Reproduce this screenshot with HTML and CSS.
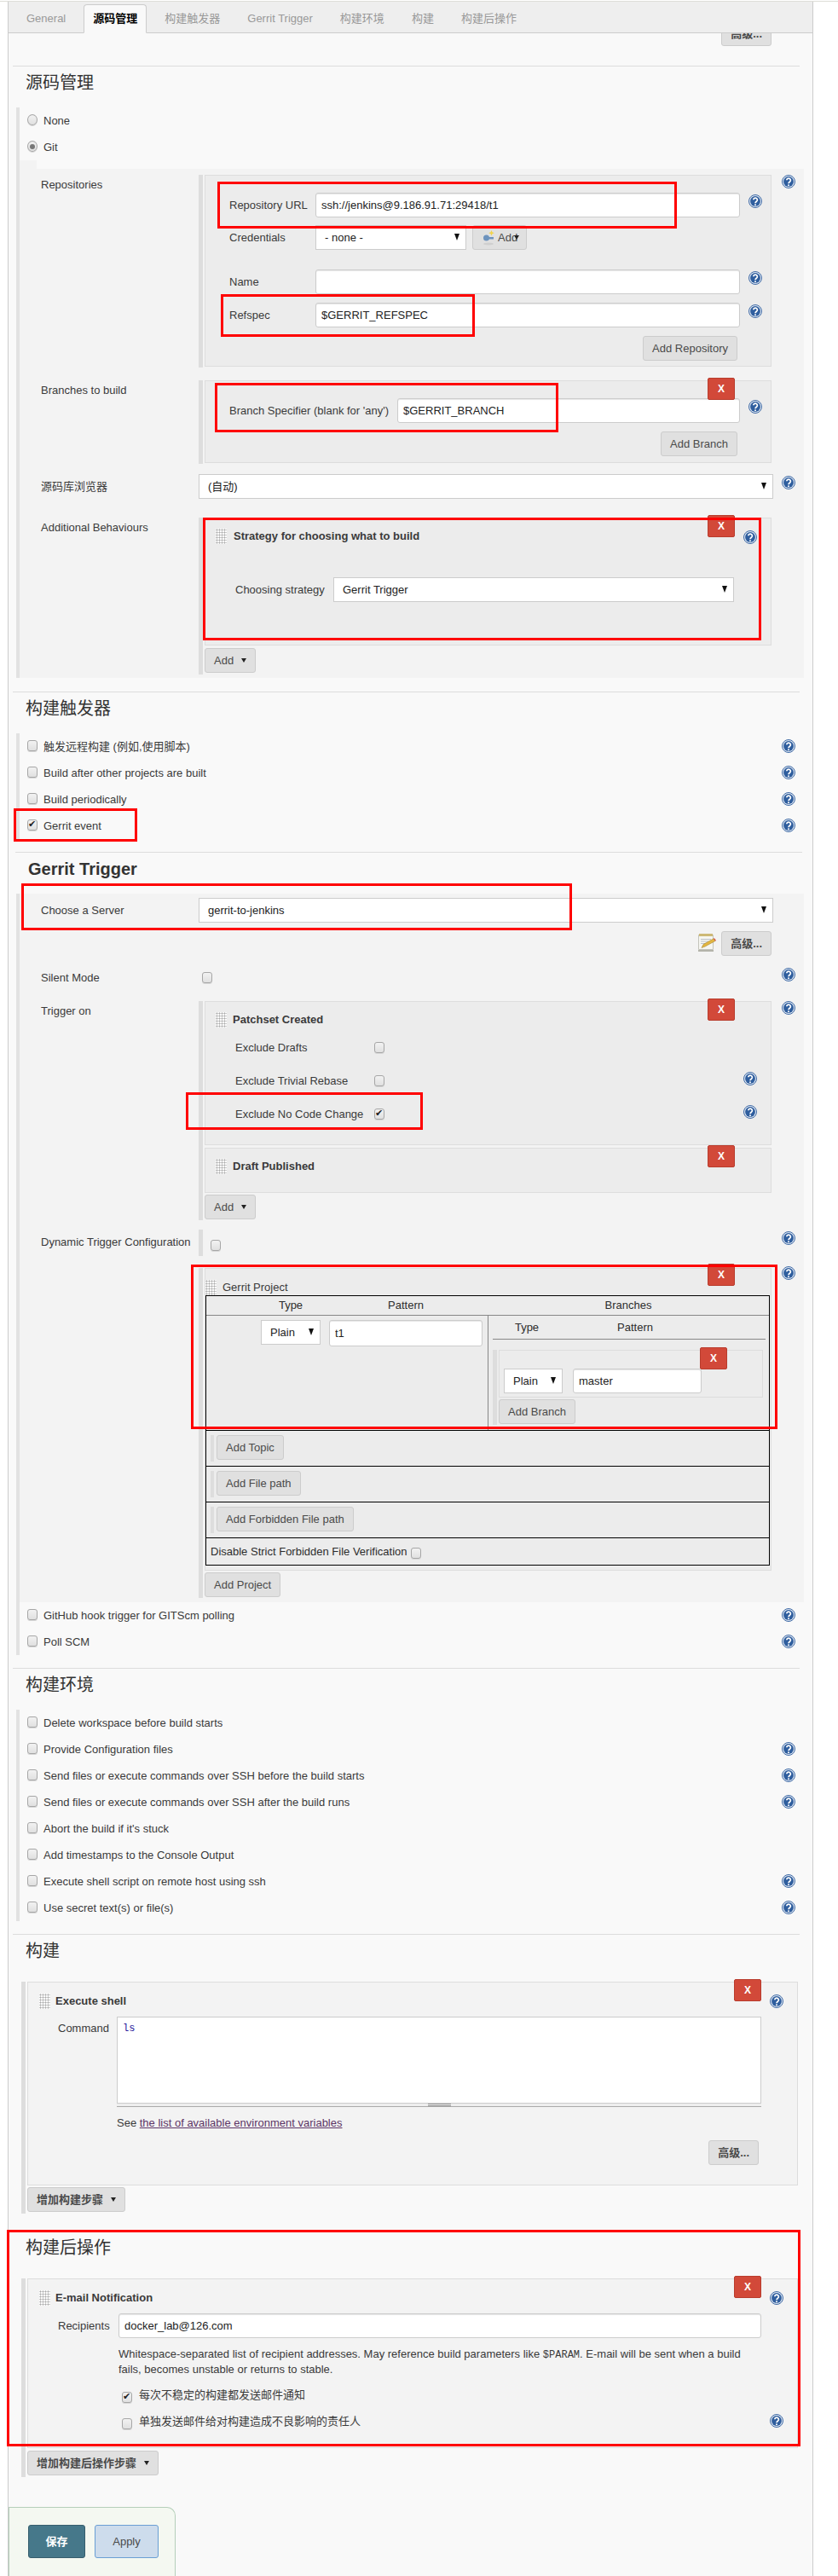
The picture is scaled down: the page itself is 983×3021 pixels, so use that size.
FILE: index.html
```html
<!DOCTYPE html>
<html lang="zh">
<head>
<meta charset="utf-8">
<title>Jenkins job configuration</title>
<link rel="stylesheet" href="styles.css">
</head>
<body>
<svg class="sprite" xmlns="http://www.w3.org/2000/svg">
  <symbol id="i-help" viewBox="0 0 16 16">
    <circle cx="8" cy="8" r="7.5" fill="#dfe7f2" stroke="#3f6aa5"/>
    <circle cx="8" cy="8" r="5.9" fill="#2f5e9e"/>
    <path d="M5.8 6.3a2.3 2.2 0 1 1 3.7 1.8c-.9.7-1.5 1.1-1.5 2.2" fill="none" stroke="#fff" stroke-width="1.7"/>
    <circle cx="8" cy="12.2" r="1" fill="#fff"/>
  </symbol>
  <symbol id="i-notepad" viewBox="0 0 23 23">
    <path d="M2.500 2.500h17v17h-17z" fill="#f6f6f1" stroke="#c4c4bb"/>
    <path d="M3 1h16v3H3z" fill="#cdb976"/>
    <path d="M5 7.500h12M5 10h9M5 12.500h6" stroke="#bcc2ca" stroke-width="1"/>
    <path d="M6 17.500l2-4L20 6.800l2 2.700-12 6.600z" fill="#e3b63f" stroke="#9a7a2a" stroke-width=".5"/>
    <path d="M20 6.800l2 2.700 1-.6-2-2.700z" fill="#d8423a"/>
    <path d="M2 20h18v2H2z" fill="#b4b4aa"/>
  </symbol>
  <symbol id="i-key" viewBox="0 0 15 18">
    <circle cx="4.500" cy="9" r="3.500" fill="#6d93bd"/>
    <path d="M6 8h7v2.500H6z" fill="#6d93bd"/>
    <path d="M10.500 0l1 2.300 2.300 1-2.300 1-1 2.300-1-2.300-2.300-1 2.300-1z" fill="#f1d44c"/>
    <ellipse cx="7" cy="16" rx="6" ry="1.500" fill="#cfcfcf"/>
  </symbol>
</svg>

<div class="topline"></div>
<main class="main">
  <nav class="tabs">
    <span class="tab">General</span>
    <span class="tab tab-active">源码管理</span>
    <span class="tab">构建触发器</span>
    <span class="tab">Gerrit Trigger</span>
    <span class="tab">构建环境</span>
    <span class="tab">构建</span>
    <span class="tab">构建后操作</span>
  </nav>

  <div class="top-adv"><button class="btn btn-strong">高级...</button></div>

  <!-- Source code management -->
  <h2 class="sec-head">源码管理</h2>
  <section class="bar-block">
    <label class="bool-row"><input type="radio" class="radio" name="scm"><span>None</span></label>
    <label class="bool-row"><input type="radio" class="radio" name="scm" checked><span>Git</span></label>
    <div class="notch"></div>
    <div class="panel panel-scm">
      <div class="form-row">
        <div class="form-label">Repositories</div>
        <div class="hetero">
          <div class="box box-repo">
            <div class="sub-row">
              <span>Repository URL</span>
              <input class="text" value="ssh://jenkins@9.186.91.71:29418/t1">
              <svg class="help help-m2"><use href="#i-help"/></svg>
            </div>
            <div class="sub-row sub-cred">
              <span>Credentials</span>
              <div class="cred-ctl">
                <select class="sel sel-cred"><option>- none -</option></select>
                <button class="btn btn-cred"><svg class="key"><use href="#i-key"/></svg>Add<i class="caret caret-over"></i></button>
              </div>
            </div>
            <div class="sub-row sub-name">
              <span>Name</span>
              <input class="text">
              <svg class="help help-m2"><use href="#i-help"/></svg>
            </div>
            <div class="sub-row sub-ref">
              <span>Refspec</span>
              <input class="text" value="$GERRIT_REFSPEC">
              <svg class="help help-m2"><use href="#i-help"/></svg>
            </div>
            <div class="add-row"><button class="btn">Add Repository</button></div>
          </div>
        </div>
        <svg class="help"><use href="#i-help"/></svg>
      </div>

      <div class="form-row row-branches">
        <div class="form-label">Branches to build</div>
        <div class="hetero">
          <div class="box box-branch">
            <button class="x-btn">X</button>
            <div class="sub-row sub-branch">
              <span>Branch Specifier (blank for 'any')</span>
              <input class="text" value="$GERRIT_BRANCH">
              <svg class="help help-m2"><use href="#i-help"/></svg>
            </div>
            <div class="add-row"><button class="btn">Add Branch</button></div>
          </div>
        </div>
      </div>

      <div class="form-row row-browser">
        <div class="form-label form-label-ctl">源码库浏览器</div>
        <select class="sel sel-full"><option>(自动)</option></select>
        <svg class="help help-m2"><use href="#i-help"/></svg>
      </div>

      <div class="form-row row-behav">
        <div class="form-label">Additional Behaviours</div>
        <div class="hetero hetero-p2">
          <div class="box box-strategy">
            <button class="x-btn">X</button>
            <div class="item-head">
              <i class="handle"></i>
              <strong>Strategy for choosing what to build</strong>
              <svg class="help help-push help-m2"><use href="#i-help"/></svg>
            </div>
            <div class="sub-row sub-strategy">
              <span>Choosing strategy</span>
              <select class="sel sel-strategy"><option>Gerrit Trigger</option></select>
            </div>
          </div>
          <button class="btn btn-add btn-m3">Add<i class="caret"></i></button>
        </div>
      </div>
    </div>
  </section>

  <!-- Build triggers -->
  <h2 class="sec-head sec-m16">构建触发器</h2>
  <section class="bar-block">
    <label class="bool-row"><input type="checkbox" class="check"><span>触发远程构建 (例如,使用脚本)</span><svg class="help help-row"><use href="#i-help"/></svg></label>
    <label class="bool-row"><input type="checkbox" class="check"><span>Build after other projects are built</span><svg class="help help-row"><use href="#i-help"/></svg></label>
    <label class="bool-row"><input type="checkbox" class="check"><span>Build periodically</span><svg class="help help-row"><use href="#i-help"/></svg></label>
    <label class="bool-row"><input type="checkbox" class="check" checked><span>Gerrit event</span><svg class="help help-row"><use href="#i-help"/></svg></label>
  </section>

  <h2 class="sec-head sec-gerrit">Gerrit Trigger</h2>
  <section class="bar-block">
    <div class="panel panel-gerrit">
      <div class="form-row">
        <div class="form-label form-label-ctl">Choose a Server</div>
        <select class="sel sel-full"><option>gerrit-to-jenkins</option></select>
      </div>
      <div class="form-row row-adv">
        <div></div>
        <div class="adv-tools">
          <svg class="notepad"><use href="#i-notepad"/></svg>
          <button class="btn btn-strong">高级...</button>
        </div>
      </div>
      <div class="form-row row-silent">
        <div class="form-label">Silent Mode</div>
        <div class="silent-ctl"><input type="checkbox" class="check"></div>
        <svg class="help"><use href="#i-help"/></svg>
      </div>
      <div class="form-row row-trigger">
        <div class="form-label">Trigger on</div>
        <div class="hetero">
          <div class="box box-patch">
            <button class="x-btn">X</button>
            <div class="item-head item-head-tight"><i class="handle"></i><strong>Patchset Created</strong></div>
            <div class="check-row check-first"><span class="check-label">Exclude Drafts</span><input type="checkbox" class="check"></div>
            <div class="check-row"><span class="check-label">Exclude Trivial Rebase</span><input type="checkbox" class="check"><svg class="help help-push help-up"><use href="#i-help"/></svg></div>
            <div class="check-row"><span class="check-label">Exclude No Code Change</span><input type="checkbox" class="check" checked><svg class="help help-push help-up"><use href="#i-help"/></svg></div>
          </div>
          <div class="box box-draft">
            <button class="x-btn">X</button>
            <div class="item-head item-head-tight"><i class="handle"></i><strong>Draft Published</strong></div>
          </div>
          <button class="btn btn-add btn-m2">Add<i class="caret"></i></button>
        </div>
        <svg class="help"><use href="#i-help"/></svg>
      </div>
      <div class="form-row row-dynamic">
        <div class="form-label form-label-ctl">Dynamic Trigger Configuration</div>
        <div class="dyn-ctl"><input type="checkbox" class="check"></div>
        <svg class="help help-m2"><use href="#i-help"/></svg>
      </div>
      <div class="form-row row-project">
        <div></div>
        <div class="hetero">
          <div class="box box-project">
            <button class="x-btn x-btn-high">X</button>
            <div class="item-head item-head-flush"><i class="handle"></i><span>Gerrit Project</span></div>
            <div class="gp-table">
              <div class="gp-head">
                <div class="pat-grid"><span>Type</span><span>Pattern</span></div>
                <div class="gp-branches">Branches</div>
              </div>
              <div class="gp-body">
                <div class="pat-grid pat-row">
                  <select class="sel sel-type"><option>Plain</option></select>
                  <input class="text text-t1" value="t1">
                </div>
                <div class="gp-right">
                  <div class="br-head"><span>Type</span><span>Pattern</span></div>
                  <div class="hetero hetero-branch">
                    <div class="box box-br-item">
                      <button class="x-btn x-btn-br">X</button>
                      <select class="sel sel-type-br"><option>Plain</option></select>
                      <input class="text text-master" value="master">
                    </div>
                    <button class="btn btn-m2">Add Branch</button>
                  </div>
                </div>
              </div>
              <div class="gp-add"><div class="gp-add-wrap"><button class="btn">Add Topic</button></div></div>
              <div class="gp-add"><div class="gp-add-wrap"><button class="btn">Add File path</button></div></div>
              <div class="gp-add"><div class="gp-add-wrap"><button class="btn">Add Forbidden File path</button></div></div>
              <div class="gp-last"><span>Disable Strict Forbidden File Verification</span><input type="checkbox" class="check"></div>
            </div>
          </div>
          <button class="btn btn-m2">Add Project</button>
        </div>
        <svg class="help help-n2"><use href="#i-help"/></svg>
      </div>
    </div>
    <label class="bool-row"><input type="checkbox" class="check"><span>GitHub hook trigger for GITScm polling</span><svg class="help help-row"><use href="#i-help"/></svg></label>
    <label class="bool-row"><input type="checkbox" class="check"><span>Poll SCM</span><svg class="help help-row"><use href="#i-help"/></svg></label>
  </section>

  <!-- Build environment -->
  <h2 class="sec-head">构建环境</h2>
  <section class="bar-block">
    <label class="bool-row"><input type="checkbox" class="check"><span>Delete workspace before build starts</span></label>
    <label class="bool-row"><input type="checkbox" class="check"><span>Provide Configuration files</span><svg class="help help-row"><use href="#i-help"/></svg></label>
    <label class="bool-row"><input type="checkbox" class="check"><span>Send files or execute commands over SSH before the build starts</span><svg class="help help-row"><use href="#i-help"/></svg></label>
    <label class="bool-row"><input type="checkbox" class="check"><span>Send files or execute commands over SSH after the build runs</span><svg class="help help-row"><use href="#i-help"/></svg></label>
    <label class="bool-row"><input type="checkbox" class="check"><span>Abort the build if it's stuck</span></label>
    <label class="bool-row"><input type="checkbox" class="check"><span>Add timestamps to the Console Output</span></label>
    <label class="bool-row"><input type="checkbox" class="check"><span>Execute shell script on remote host using ssh</span><svg class="help help-row"><use href="#i-help"/></svg></label>
    <label class="bool-row"><input type="checkbox" class="check"><span>Use secret text(s) or file(s)</span><svg class="help help-row"><use href="#i-help"/></svg></label>
  </section>

  <!-- Build -->
  <h2 class="sec-head">构建</h2>
  <section class="step-col">
    <div class="box box-step">
      <button class="x-btn">X</button>
      <div class="item-head item-head-step">
        <i class="handle"></i><strong>Execute shell</strong>
        <svg class="help help-push help-m1"><use href="#i-help"/></svg>
      </div>
      <div class="cmd-row">
        <div class="cmd-label">Command</div>
        <div>
          <textarea class="code">ls</textarea>
          <div class="grip"><i></i></div>
        </div>
      </div>
      <div class="env-link">See <a href="#">the list of available environment variables</a></div>
      <div class="step-adv"><button class="btn btn-strong">高级...</button></div>
    </div>
    <button class="btn btn-add btn-strong btn-m2">增加构建步骤<i class="caret"></i></button>
  </section>

  <!-- Post build -->
  <h2 class="sec-head sec-m20">构建后操作</h2>
  <section class="step-col">
    <div class="box box-step">
      <button class="x-btn">X</button>
      <div class="item-head item-head-step">
        <i class="handle"></i><strong>E-mail Notification</strong>
        <svg class="help help-push help-m1"><use href="#i-help"/></svg>
      </div>
      <div class="rcpt-row">
        <span>Recipients</span>
        <input class="text" value="docker_lab@126.com">
      </div>
      <p class="desc">Whitespace-separated list of recipient addresses. May reference build parameters like <code>$PARAM</code>. E-mail will be sent when a build fails, becomes unstable or returns to stable.</p>
      <div class="mail-opts">
        <label class="mail-row"><input type="checkbox" class="check" checked><span>每次不稳定的构建都发送邮件通知</span></label>
        <label class="mail-row"><input type="checkbox" class="check"><span>单独发送邮件给对构建造成不良影响的责任人</span><svg class="help help-push help-mail"><use href="#i-help"/></svg></label>
      </div>
    </div>
    <button class="btn btn-add btn-strong btn-m3">增加构建后操作步骤<i class="caret"></i></button>
  </section>

  <div class="save-box">
    <button class="btn-save">保存</button>
    <button class="btn-apply">Apply</button>
  </div>
</main>

<!-- Red review annotations lying over the form -->
<div class="anno anno-url"></div>
<div class="anno anno-refspec"></div>
<div class="anno anno-branch"></div>
<div class="anno anno-strategy"></div>
<div class="anno anno-event"></div>
<div class="anno anno-server"></div>
<div class="anno anno-nocode"></div>
<div class="anno anno-project"></div>
<div class="anno anno-post"></div>
</body>
</html>
```
FILE: styles.css
```css
* { box-sizing: border-box; }
html, body { margin: 0; padding: 0; }
body {
  position: relative;
  padding-top: 1px;
  background: #fff;
  color: #3a3a3a;
  font: 13px/18px "Liberation Sans", "Noto Sans CJK SC", sans-serif;
}
.sprite { display: none; }
.topline { height: 1px; background: #deded8; }

.main {
  width: 945px;
  margin-left: 9px;
  background: #f9f9f9;
  border-left: 1px solid #ccc;
  border-right: 1px solid #ccc;
}

/* tabs */
.tabs {
  display: flex;
  align-items: flex-end;
  gap: 10px;
  height: 37px;
  padding-left: 10px;
  background: #eee;
  border-bottom: 1px solid #ccc;
}
.tab {
  height: 34px;
  padding: 0 10px;
  margin-bottom: -1px;
  border: 1px solid transparent;
  line-height: 31px;
  color: #999;
  white-space: nowrap;
}
.tab-active {
  background: #f9f9f9;
  border-color: #ccc;
  border-bottom-color: #f9f9f9;
  border-radius: 4px 4px 0 0;
  color: #000;
  font-weight: bold;
}

/* buttons */
.btn {
  display: inline-flex;
  align-items: center;
  flex: none;
  height: 29px;
  padding: 0 10px;
  background: #e0e0e0;
  border: 1px solid #ccc;
  border-radius: 3px;
  color: #4a4a4a;
  font: inherit;
  white-space: nowrap;
}
.btn-strong { font-weight: bold; }
.btn-m2 { margin-top: 2px; }
.btn-m3 { margin-top: 3px; }
.btn-add .caret { margin-left: 9px; }
.caret {
  display: inline-block;
  width: 0;
  height: 0;
  border-left: 3.5px solid transparent;
  border-right: 3.5px solid transparent;
  border-top: 5px solid #222;
}
.btn-cred { padding: 0 0 0 11px; width: 64px; }
.key { width: 15px; height: 18px; margin-right: 3px; }
.caret-over { margin-left: -4px; }
.x-btn {
  position: absolute;
  top: -4px;
  right: 42px;
  width: 32px;
  height: 26px;
  padding: 0;
  background: #d24939;
  border: 1px solid #b93c2d;
  border-radius: 2px;
  color: #fff;
  font: bold 12px/24px "Liberation Sans", sans-serif;
}
.x-btn-high { top: -6px; }
.x-btn-br { right: 41px; }

.top-adv {
  display: flex;
  justify-content: flex-end;
  align-items: flex-end;
  height: 15px;
  margin-bottom: 23px;
  padding-right: 48px;
  overflow: hidden;
}
.top-adv .btn { border-radius: 0 0 3px 3px; }

/* section headings */
.sec-head {
  height: 49px;
  margin: 15px 15px 0 5px;
  padding: 5px 0 0 15px;
  border-top: 1px solid #ddd;
  color: #333;
  font-size: 20px;
  font-weight: normal;
  line-height: 28px;
}
.top-adv + .sec-head { margin-top: 0; }
.sec-m16 { margin-top: 16px; }
.sec-m20 { margin-top: 20px; }
.sec-gerrit {
  margin-left: 8px;
  margin-right: 12px;
  font-weight: bold;
}

/* bars and panels */
.bar-block {
  margin: 0 10px 0 9px;
  border-left: 4px solid #e2e2e2;
}
.bool-row {
  display: flex;
  align-items: center;
  height: 31px;
  padding: 0 10px 0 9px;
}
.bool-row > input { margin: -3px 7px 0 0; }
.help {
  display: block;
  flex: none;
  width: 16px;
  height: 16px;
}
.help-row { margin: -1px 0 0 auto; }
.help-m1 { margin-top: 1px; }
.help-m2 { margin-top: 2px; }
.help-n2 { margin-top: -2px; }
.help-push { margin-left: auto; }
.help-up { margin-bottom: 5px; }
.help-mail { margin-top: 4px; }

.check, .radio {
  appearance: none;
  position: relative;
  flex: none;
  width: 12px;
  height: 13px;
  margin: 0;
  background: linear-gradient(#f2f2f2, #e0e0e0);
  border: 1px solid #a6a6a6;
  box-shadow: 0 1px 0 #d8d8d8;
}
.check { border-radius: 3px; }
.radio { border-radius: 50%; }
.check:checked::after {
  content: "✔";
  position: absolute;
  left: 0;
  top: -1px;
  color: #222;
  font: 11px/12px "DejaVu Sans", sans-serif;
}
.radio:checked::after {
  content: "";
  position: absolute;
  left: 2px;
  top: 3px;
  width: 6px;
  height: 6px;
  border-radius: 50%;
  background: #777;
}
.notch { width: 20px; height: 10px; background: #f3f3f3; }
.panel { background: #f3f3f3; }
.panel-scm { padding: 7px 0 4px; }
.panel-gerrit { padding: 5px 0 5px; }

.form-row {
  display: grid;
  grid-template-columns: 175px 674px 16px;
  column-gap: 10px;
  align-items: start;
  padding-left: 25px;
}
.form-label { line-height: 24px; white-space: nowrap; }
.form-label-ctl { line-height: 29px; }
.row-branches { margin-top: 15px; }
.row-browser { margin-top: 12px; }
.row-behav { margin-top: 22px; }
.row-adv { margin-top: 10px; }
.row-silent { margin-top: 14px; }
.row-trigger { margin-top: 15px; }
.row-dynamic { margin-top: 11px; }
.row-project { margin-top: 14px; }

.hetero {
  padding: 0 2px 1px 2px;
  border-left: 5px solid #ddd;
}
.hetero-p2 { padding-bottom: 2px; }
.box {
  position: relative;
  background: #ececec;
  border: 1px solid #ddd;
}
.box + .box { margin-top: 3px; }
.box-repo { padding: 20px 0 6px; }
.box-branch { padding: 20px 0 7px; }
.box-strategy { padding-bottom: 50px; }
.box-patch { padding-bottom: 21px; }
.box-draft { padding-bottom: 21px; }
.box-project { padding-bottom: 5px; }

.sub-row {
  display: grid;
  grid-template-columns: 91px 498px 16px;
  column-gap: 10px;
  align-items: center;
  padding-left: 28px;
  white-space: nowrap;
}
.sub-row .help { align-self: start; }
.sub-cred { margin-top: 9px; }
.sub-name { margin-top: 23px; }
.sub-ref { margin-top: 10px; }
.sub-branch { grid-template-columns: 187px 402px 16px; }
.sub-strategy {
  grid-template-columns: 105px 470px;
  margin-top: 39px;
  padding-left: 35px;
}
.add-row {
  display: flex;
  justify-content: flex-end;
  margin-top: 10px;
  padding-right: 39px;
}
.cred-ctl { display: flex; gap: 7px; }

/* fields */
.text, .sel {
  display: block;
  width: 100%;
  height: 29px;
  padding: 0 6px;
  background-color: #fff;
  border: 1px solid #ccc;
  color: #222;
  font: inherit;
}
.text {
  border-radius: 3px;
  box-shadow: inset 0 1px 1px #e6e6e6;
}
.sel {
  appearance: none;
  padding: 0 16px 0 10px;
  border-radius: 0;
  background-image: url("data:image/svg+xml,%3Csvg xmlns='http://www.w3.org/2000/svg' width='6' height='8'%3E%3Cpath d='M0 0h6L3 8z' fill='%23111'/%3E%3C/svg%3E");
  background-repeat: no-repeat;
  background-position: right 7px top 9px;
}
.sel-cred { width: 177px; }
.btn-cred { height: 29px; }
.sel-strategy { width: 470px; }
.sel-full { width: 674px; }
.sel-type { width: 70px; }
.text-t1 { width: 180px; height: 31px; }
.sel-type-br { width: 69px; }
.text-master { width: 151px; }

/* repeatable items */
.item-head {
  display: flex;
  align-items: flex-start;
  gap: 8px;
  height: 30px;
  padding: 12px 16px 0 12px;
  line-height: 18px;
  white-space: nowrap;
}
.item-head-tight { gap: 7px; }
.item-head-flush { height: 31px; padding: 13px 0 0 0; gap: 7px; }
.item-head-step { height: 31px; padding: 13px 16px 0 13px; gap: 6px; }
.handle {
  display: block;
  flex: none;
  width: 13px;
  height: 18px;
  background-color: #fbfbfb;
  background-image: radial-gradient(#aaa 45%, transparent 50%);
  background-size: 3px 3px;
}
.check-row {
  display: flex;
  align-items: center;
  height: 29px;
  margin-top: 10px;
  padding: 0 16px 0 35px;
}
.check-first { margin-top: 9px; }
.check-label { flex: none; width: 163px; white-space: nowrap; }

.adv-tools {
  display: flex;
  justify-content: flex-end;
  gap: 6px;
  padding-right: 2px;
}
.notepad { width: 23px; height: 23px; margin-top: 2px; }
.silent-ctl { padding: 5px 0 0 4px; height: 24px; }
.dyn-ctl {
  height: 31px;
  padding: 12px 0 0 9px;
  border-left: 5px solid #ddd;
}

/* gerrit project table */
.gp-table {
  width: 662px;
  border: 1px solid #000;
  color: #2c2c2c;
}
.gp-head {
  display: grid;
  grid-template-columns: 330px 330px;
  height: 23px;
  border-bottom: 1px solid #888;
  line-height: 21px;
  text-align: center;
}
.pat-grid {
  display: grid;
  grid-template-columns: 70px 180px;
  column-gap: 10px;
  padding-left: 64px;
}
.pat-row { align-items: start; padding-top: 5px; }
.gp-body {
  display: grid;
  grid-template-columns: 330px 330px;
  height: 135px;
  border-bottom: 1px solid #000;
}
.gp-right {
  padding: 0 4px 0 5px;
  border-left: 1px solid #888;
}
.br-head {
  display: grid;
  grid-template-columns: 70px 184px;
  height: 28px;
  padding-left: 5px;
  border-bottom: 1px solid #888;
  line-height: 28px;
  text-align: center;
}
.hetero-branch { margin-top: 12px; padding-right: 3px; }
.box-br-item {
  display: flex;
  gap: 12px;
  padding: 21px 0 4px 5px;
}
.gp-add {
  height: 42px;
  padding: 5px;
  border-bottom: 1px solid #000;
}
.gp-add-wrap {
  height: 31px;
  padding-left: 3px;
  border-left: 4px solid #ddd;
}
.gp-last {
  display: flex;
  align-items: center;
  height: 31px;
  padding-left: 5px;
  white-space: nowrap;
}
.gp-last .check { margin: 4px 0 0 4px; }

/* build steps */
.step-col {
  margin: 7px 17px 0 15px;
  padding: 0 0 2px 2px;
  border-left: 5px solid #ddd;
}
.box-step { background: #f3f3f3; }
.cmd-row {
  display: grid;
  grid-template-columns: 69px 756px;
  margin-top: 9px;
  padding-left: 35px;
}
.cmd-label { line-height: 28px; }
.code {
  display: block;
  width: 756px;
  height: 101px;
  padding: 5px 6px;
  background: #fff;
  border: 1px solid #ccc;
  border-bottom: 0;
  color: #2a1a9a;
  font: 12px/16px "Liberation Mono", monospace;
  resize: none;
}
.grip {
  display: flex;
  justify-content: center;
  align-items: center;
  height: 5px;
  background: #eee;
  border-top: 1px solid #ccc;
  border-bottom: 1px solid #aaa;
}
.grip i {
  display: block;
  width: 27px;
  height: 3px;
  border-top: 1px solid #999;
  border-bottom: 1px solid #999;
}
.env-link {
  margin-top: 7px;
  padding-left: 104px;
  line-height: 24px;
}
.env-link a { color: #5c3566; }
.step-adv {
  display: flex;
  justify-content: flex-end;
  margin-top: 8px;
  padding: 0 45px 23px 0;
}
.rcpt-row {
  display: grid;
  grid-template-columns: 71px 754px;
  align-items: center;
  margin-top: 9px;
  padding-left: 35px;
}
.desc {
  width: 860px;
  margin: 10px 0 0;
  padding-left: 106px;
  line-height: 18px;
}
.desc code { font: 12px "Liberation Mono", monospace; }
.mail-opts { margin-top: 8px; padding: 0 16px 12px 110px; }
.mail-row {
  display: flex;
  align-items: flex-start;
  height: 31px;
  line-height: 26px;
}
.mail-row > input { margin: 9px 8px 0 0; }

/* save bar */
.save-box {
  display: flex;
  gap: 11px;
  width: 196px;
  height: 82px;
  margin-top: 35px;
  padding: 20px 0 0 22px;
  background: #f4f8f1;
  border: 1px solid #b5cfba;
  border-bottom: 0;
  border-radius: 0 10px 0 0;
}
.btn-save, .btn-apply {
  height: 39px;
  padding: 0;
  border-radius: 3px;
  font: inherit;
}
.btn-save {
  width: 67px;
  background: #46788a;
  border: 1px solid #365e6d;
  color: #fff;
  font-weight: bold;
}
.btn-apply {
  width: 75px;
  background: #cddcec;
  border: 1px solid #6a9fd4;
  color: #4a4a4a;
}

/* red review annotations */
.anno {
  position: absolute;
  border: 3px solid #f00;
  pointer-events: none;
}
.anno-url { left: 255px; top: 213px; width: 539px; height: 55px; }
.anno-refspec { left: 259px; top: 345px; width: 298px; height: 50px; }
.anno-branch { left: 252px; top: 449px; width: 403px; height: 58px; }
.anno-strategy { left: 238px; top: 607px; width: 655px; height: 144px; }
.anno-event { left: 16px; top: 948px; width: 145px; height: 39px; }
.anno-server { left: 25px; top: 1036px; width: 646px; height: 55px; }
.anno-nocode { left: 218px; top: 1281px; width: 278px; height: 44px; }
.anno-project { left: 224px; top: 1483px; width: 688px; height: 193px; }
.anno-post { left: 8px; top: 2615px; width: 931px; height: 254px; }
```
